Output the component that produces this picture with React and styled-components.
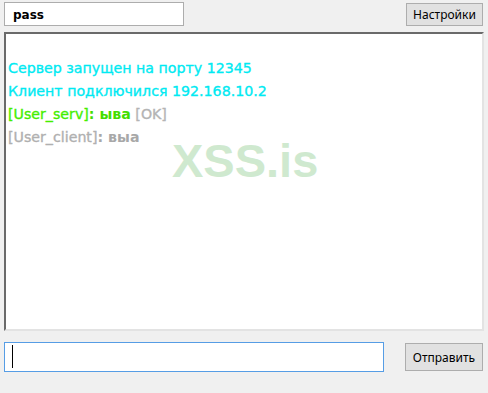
import React from "react";
import styled, { createGlobalStyle } from "styled-components";

const Global = createGlobalStyle`
  html, body { margin: 0; padding: 0; background: #f0f0f0; }
  body { font-family: "Liberation Sans", Arial, sans-serif; }
`;

const Window = styled.div`
  width: 488px;
  height: 393px;
  background: #f0f0f0;
  display: flex;
  flex-direction: column;
  box-sizing: border-box;
  padding: 2px 4px 0 4px;
`;

const TopRow = styled.div`
  display: flex;
  justify-content: space-between;
  align-items: flex-start;
  height: 24px;
`;

const PassField = styled.div`
  width: 180px;
  height: 24px;
  box-sizing: border-box;
  background: #fff;
  border: 1px solid #adadad;
  padding: 1px 0 0 8px;
  display: flex;
  align-items: center;
  font-family: "DejaVu Sans", sans-serif;
  font-weight: bold;
  font-size: 12px;
  color: #000;
`;

const Button = styled.div`
  width: ${(p) => p.$w}px;
  height: ${(p) => p.$h}px;
  margin-top: ${(p) => p.$mt || 0}px;
  box-sizing: border-box;
  background: #e1e1e1;
  border: 1px solid #adadad;
  display: flex;
  align-items: center;
  justify-content: center;
  font-family: "Noto Sans", "Liberation Sans", sans-serif;
  font-size: 12px;
  color: #000;
  margin-right: 1px;
`;

const ChatPanel = styled.div`
  position: relative;
  margin-top: 6px;
  width: 480px;
  height: 299px;
  box-sizing: border-box;
  background: #fff;
  border-top: 2px solid #6a6a6a;
  border-left: 2px solid #6a6a6a;
  border-right: 2px solid #e3e3e3;
  border-bottom: 2px solid #e3e3e3;
  padding: 23px 0 0 2px;
  overflow: hidden;
`;

const Line = styled.div`
  font-family: "DejaVu Sans", sans-serif;
  font-size: 14.2px;
  line-height: 23px;
  white-space: nowrap;
  color: ${(p) => p.$color || "#000"};
  -webkit-text-stroke: 0.35px currentColor;
  position: relative;
  z-index: 1;
`;

const Part = styled.span`
  color: ${(p) => p.$color};
  font-weight: ${(p) => (p.$bold ? "bold" : "normal")};
  -webkit-text-stroke: ${(p) => (p.$bold ? "0" : "0.35px")} currentColor;
`;

const Watermark = styled.div`
  position: absolute;
  left: 166px;
  top: 103px;
  font-family: "Liberation Sans", Arial, sans-serif;
  font-weight: bold;
  font-size: 47px;
  line-height: 47px;
  color: #cfe9cf;
  z-index: 0;
`;

const BottomRow = styled.div`
  display: flex;
  justify-content: space-between;
  align-items: flex-start;
  margin-top: 11px;
`;

const MessageField = styled.div`
  width: 380px;
  height: 30px;
  box-sizing: border-box;
  background: #fff;
  border: 1px solid #569de5;
  padding: 2px 0 0 7px;
`;

const Caret = styled.div`
  width: 1px;
  height: 23px;
  background: #000;
`;

export default function App() {
  return (
    <>
      <Global />
      <Window>
        <TopRow>
          <PassField>pass</PassField>
          <Button $w={77} $h={23} $mt={1}>Настройки</Button>
        </TopRow>
        <ChatPanel>
          <Watermark>XSS.is</Watermark>
          <Line $color="#00eaf2">Сервер запущен на порту 12345</Line>
          <Line $color="#00eaf2">Клиент подключился 192.168.10.2</Line>
          <Line>
            <Part $color="#44ee00">[User_serv]</Part>
            <Part $color="#44dd00" $bold>: ыва</Part>
            <Part $color="#b4b4b4"> [OK]</Part>
          </Line>
          <Line>
            <Part $color="#b0b0b0">[User_client]</Part>
            <Part $color="#a8a8a8" $bold>: выа</Part>
          </Line>
        </ChatPanel>
        <BottomRow>
          <MessageField>
            <Caret />
          </MessageField>
          <Button $w={78} $h={28} $mt={1}>Отправить</Button>
        </BottomRow>
      </Window>
    </>
  );
}
